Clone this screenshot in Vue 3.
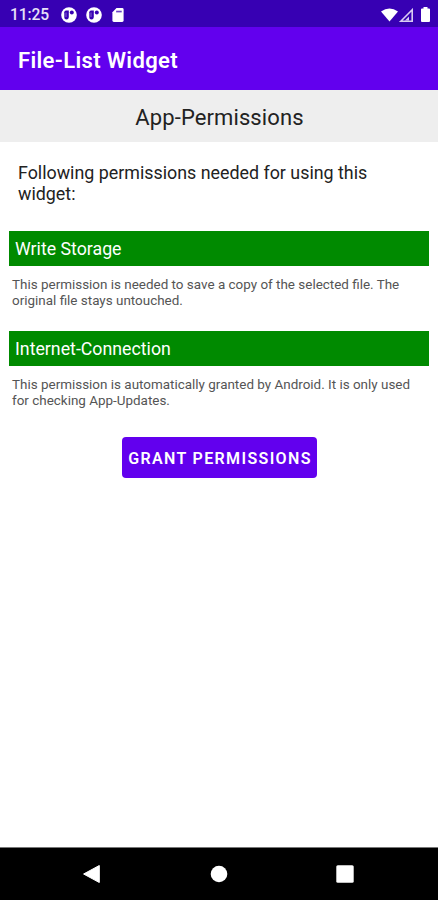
<script setup>
const permissions = [
  { name: 'Write Storage', lines: ['This permission is needed to save a copy of the selected file. The', 'original file stays untouched.'] },
  { name: 'Internet-Connection', lines: ['This permission is automatically granted by Android. It is only used', 'for checking App-Updates.'] },
]
</script>

<template>
  <div class="screen">
    <div class="status">
      <span class="clock">11:25</span>
      <svg v-for="n in 2" :key="n" class="disc" viewBox="0 0 16 16">
        <circle cx="8" cy="8" r="7.8" fill="#fff" />
        <path d="M3.300 5.200Q3.300 3.500 5 3.500H7.800V9.500Q7.800 12.500 5.500 12.500 3.300 12.500 3.300 10.500z" fill="#3700b3" />
        <path d="M5 5.500v4.500" stroke="#8d6fd0" stroke-width=".9" />
        <circle cx="10.800" cy="5.500" r="2" fill="#3700b3" />
      </svg>
      <svg class="sd" viewBox="0 0 12 15">
        <path d="M4.400 0H10.500q1.500 0 1.500 1.500v12q0 1.500-1.500 1.500h-9Q0 15 0 13.500V4.500z" fill="#fff" />
        <path d="M4 3.800h6" stroke="#3700b3" stroke-width="1.800" stroke-opacity=".75" />
      </svg>
      <div class="signals">
        <svg class="wifi" viewBox="0 0 18 14"><path d="M0 3.300Q9-3.300 18 3.300L9 14z" fill="#fff" /></svg>
        <svg class="cell" viewBox="0 0 14 14">
          <path d="M1.800 13.200L13.200 1.800V13.200z" fill="none" stroke="#d9ccf2" stroke-width="1.600" />
          <path d="M6 12.500L10 8.500v4z" fill="#d9ccf2" />
        </svg>
        <svg class="battery" viewBox="0 0 9 15"><path d="M2.500 0h4v1.500H8q1 0 1 1V14q0 1-1 1H1q-1 0-1-1V2.500q0-1 1-1h1.500z" fill="#fff" /></svg>
      </div>
    </div>
    <header class="bar">File-List Widget</header>
    <div class="heading">App-Permissions</div>
    <main class="content">
      <p class="intro">Following permissions needed for using this<br />widget:</p>
      <section v-for="p in permissions" :key="p.name" class="permission">
        <h2>{{ p.name }}</h2>
        <p><span v-for="line in p.lines" :key="line">{{ line }}</span></p>
      </section>
      <button class="grant">GRANT PERMISSIONS</button>
    </main>
    <nav class="nav">
      <svg viewBox="0 0 18 18"><path d="M.6 9L16.300.5V17.500z" fill="#fff" stroke="#fff" stroke-linejoin="round" /></svg>
      <svg viewBox="0 0 18 18"><circle cx="9" cy="9" r="8.300" fill="#fff" /></svg>
      <svg viewBox="0 0 18 18"><rect x=".3" y=".3" width="17.400" height="17.400" rx="1.500" fill="#fff" /></svg>
    </nav>
  </div>
</template>

<style>
body { margin: 0; }
</style>

<style scoped>
.screen { width: 438px; height: 900px; display: flex; flex-direction: column; background: #fff; font-family: Roboto, sans-serif; box-sizing: border-box; }
.status { height: 27px; flex: none; display: flex; align-items: center; background: #3700b3; color: #e8e0f8; padding: 2px 8px 0 10px; box-sizing: border-box; }
.clock { width: 51px; font-size: 15.6px; font-weight: 500; line-height: 20px; letter-spacing: -0.1px; }
.disc { width: 16px; height: 16px; margin-right: 9px; }
.sd { width: 12px; height: 14px; margin-left: 1px; }
.signals { margin-left: auto; display: flex; align-items: center; }
.wifi { width: 17px; height: 14px; }
.cell { width: 14px; height: 14px; margin-left: 1px; }
.battery { width: 9px; height: 15px; margin-left: 8px; }
.bar { height: 63px; flex: none; box-sizing: border-box; padding: 3px 18px 0; line-height: 61px; background: #6200ee; color: #fff; font-size: 22px; font-weight: 600; letter-spacing: 0.35px; white-space: nowrap; }
.heading { height: 52px; flex: none; background: #eee; color: #222; font-size: 22px; letter-spacing: 0.1px; line-height: 55px; padding-left: 1px; text-align: center; white-space: nowrap; }
.content { flex: 1; min-height: 0; display: flex; flex-direction: column; padding: 20px 9px 0; }
.intro { margin: 0 9px 27px; font-size: 17.85px; line-height: 21px; color: #222; white-space: nowrap; }
.permission { height: 100px; flex: none; }
h2 { margin: 0; height: 35px; padding-left: 6px; background: #008a00; color: #fff; font-size: 17.75px; line-height: 36px; font-weight: 400; white-space: nowrap; }
.permission p { margin: 11px 0 0 3px; font-size: 13.45px; line-height: 16px; color: #555; }
.permission span { display: block; white-space: nowrap; }
.grant { align-self: center; width: 195px; height: 41px; margin-top: 6px; padding: 2px 0 0 2px; border: 0; border-radius: 4px; background: #6200ee; color: #fff; font: 600 16px Roboto, sans-serif; letter-spacing: 1.35px; white-space: nowrap; }
.nav { height: 53px; flex: none; box-sizing: border-box; border-top: 1px solid #777; background: #000; display: flex; align-items: center; justify-content: space-between; padding: 0 84px 0 83px; }
.nav svg { width: 18px; height: 18px; }
</style>
